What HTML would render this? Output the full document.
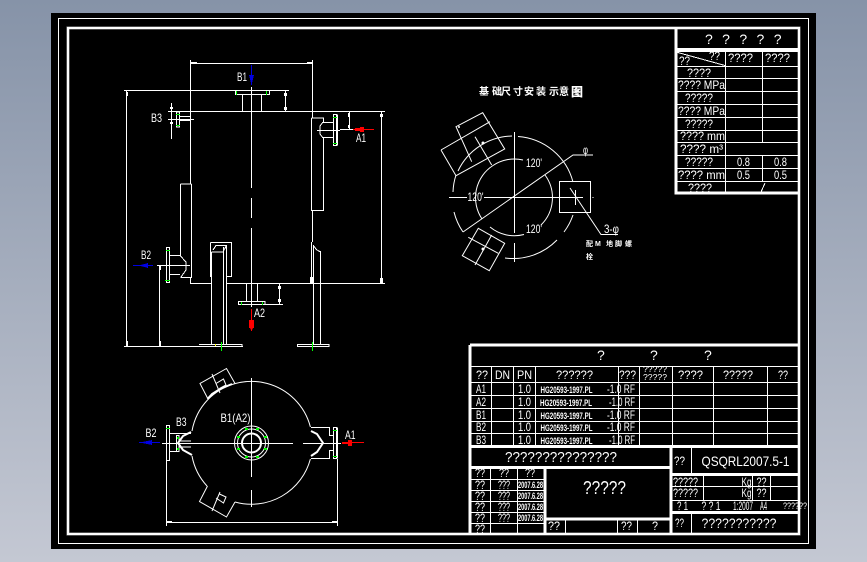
<!DOCTYPE html>
<html>
<head>
<meta charset="utf-8">
<style>
html,body{margin:0;padding:0;width:867px;height:562px;overflow:hidden;background:linear-gradient(#8693a8,#c4c8d3)}
svg{position:absolute;left:0;top:0}
text{fill:#fff;font-family:"Liberation Sans","Noto Sans CJK SC",sans-serif;font-size:12px}
.c{font-family:"Liberation Sans","Noto Sans CJK SC",sans-serif;font-size:10px;font-weight:bold}
.s{font-size:9px;font-weight:bold}
</style>
</head>
<body>
<svg width="867" height="562" viewBox="0 0 867 562" xmlns="http://www.w3.org/2000/svg">
<rect x="51" y="13" width="765" height="536" fill="#000"/>
<g fill="none" shape-rendering="crispEdges">
<rect x="58.5" y="18.5" width="750" height="525" stroke="#fff"/>
<rect x="68" y="28" width="731" height="506" stroke="#999" stroke-width="3"/>
<rect x="68" y="28" width="731" height="506" stroke="#fff" stroke-width="2"/>
<!-- top right table -->
<path stroke="#fff" stroke-width="3" d="M676 28V193H799M676 49.5H799"/>
<path stroke="#fff" d="M676 51.5H798M676 66.5H798M676 78.5H798M676 91.5H798M676 104.5H798M676 117.5H798M676 130.5H798M676 142.5H798M676 155.5H798M676 168.5H798M676 181.5H798M725.5 51V193M762.5 51V142M762.5 155V181"/>
<!-- bottom table -->
<path stroke="#fff" stroke-width="3" d="M470 345H799M470 345V534M470 446.5H799M470 467.5H671M671 446V534M672 474.5H799M672 512.5H799M545 467V534M545 519H671"/>
<path stroke="#fff" d="M470 366.5H798M470 382.5H798M470 395.5H798M470 408.5H798M470 421.5H798M470 433.5H798M491.5 367V446M513.5 367V446M535.5 367V446M618.5 367V446M639.5 367V446M672.5 367V446M713.5 367V446M767.5 367V446M691.5 447V474M691.5 513V533M672 486.5H798M672 500.5H798M703.5 475V500M752.5 475V500M770.5 475V500M470 479.5H544M470 490.5H544M470 501.5H544M470 512.5H544M470 523.5H544M490.5 468V533M517.5 468V533M565.5 520V533M617.5 520V533M637.5 520V533"/>
</g>
<g fill="none" stroke="#fff" shape-rendering="crispEdges">
<path d="M676 52L725 65.5M765 183L761 192"/>
<!-- front view -->
<path d="M190.5 60V184M312.5 60V118M191 63.5H312M124 90.5H289M168 111.5H385M235.5 90V94.5H269.5V90M242.5 94V111M261.5 94V111M285.5 91V111M126.5 91V346M381.5 111V283M349.5 111V129M340 129.5H353"/>
<path d="M171.5 103V139M168 119.5H194M176.5 112V127H179.5V112ZM179 116.5H190M179 120.5H190M180.5 184H191.5M180.5 184V256M191.5 184V277.5H180.5M190.5 277V283.5H211M227 283.5H385"/>
<path d="M166.5 247.5V282.5H169.5V247.5ZM169 255.5H180L186 262V270L181 277M169 274.5H180M157 265.5H190M159.5 265V346M124 346.5H243"/>
<path d="M210.5 242.5V277M210.5 242.5H231.5V276.5H227M211.5 252V345M211.5 252H223.5M223.5 247V345M226.5 245.5V345M213 250L216 245.5H226.5L223.5 251M199 344.5H242V346M297.5 344.5H329V346.5H297.5Z"/>
<path d="M311.5 118V210.5H323.5V137M311.5 118H323.5V122M312.5 210V242M311.5 242V277M313.5 245V345M313.5 246L317 250L320.5 252M320.5 251V344"/>
<path d="M333.5 114.5V145.5H337V114.5ZM323 122.5H333M323 137.5H333M323 122L320 126V134L323 138M317 130.5H340"/>
<path d="M246.5 283V302M257.5 283V302M238.5 301.5H265V304.5H238.5ZM238 304.5H283M279.5 284V304M251.5 87V188M251.5 198V218M251.5 228V307"/>
<path stroke-width="2" d="M337 115V145"/>
</g>
<!-- dim ticks -->
<g fill="#fff" shape-rendering="crispEdges">
<rect x="191" y="62" width="6" height="2"/><rect x="307" y="62" width="6" height="2"/>
<rect x="284" y="93" width="3" height="3"/><rect x="284" y="107" width="3" height="3"/>
<rect x="126" y="92" width="2" height="4"/><rect x="380" y="114" width="3" height="3"/><rect x="380" y="278" width="3" height="5"/>
<rect x="348" y="113" width="2" height="4"/><rect x="348" y="125" width="2" height="3"/>
<rect x="170" y="107" width="3" height="2"/><rect x="170" y="122" width="3" height="2"/>
<rect x="126" y="341" width="2" height="5"/><rect x="159" y="341" width="2" height="5"/><rect x="159" y="266" width="2" height="4"/>
<rect x="278" y="286" width="3" height="3"/><rect x="278" y="299" width="3" height="3"/>
<rect x="310" y="277" width="3" height="6"/>
<rect x="167" y="521" width="5" height="2"/><rect x="332" y="521" width="5" height="2"/>
</g>
<!-- green -->
<path fill="none" stroke="#0f0" shape-rendering="crispEdges" d="M236.5 91V95M266.5 91V95M176 114.5H180M176 125.5H180M166 250.5H170M165 280.5H170M333 117.5H337M333 143.5H337M221.5 342V351M312.5 342V351M241.5 302V305M262.5 302V305"/>
<rect x="215" y="344" width="1" height="2" fill="#ff0"/>
<!-- arrows -->
<g shape-rendering="crispEdges">
<path stroke="#0000e0" fill="none" d="M251.5 65V85M133 265.5H153M139 442.5H160"/>
<path fill="#0000e0" d="M249 75H254L251.5 85ZM139 265.5L148 263V268ZM140 442.5L152 440V445Z"/>
<path stroke="#f00" fill="none" d="M353 129.5H374M251.5 309V331M342 442.5H364"/>
<path fill="#f00" d="M355 128H360V127H364V132H360V131H355ZM249 320H254V328H253L251.5 331L250 328H249ZM342 442H348V440H352V446H348V444H342Z"/>
</g>
<!-- plan view -->
<g fill="none" stroke="#fff">
<path d="M207.5 400A61 61 0 0 1 310.4 427M310.4 459A61 61 0 0 1 235 502M207 486A61 61 0 0 1 192 456M192 431A61 61 0 0 1 207.5 400"/>
<path d="M207.5 399L212 394L220 389L232 384" stroke-width="2"/>
<path shape-rendering="crispEdges" d="M251.5 378V477M251.5 490V507M162 443.5H293M303 443.5H341"/>
<circle cx="251.5" cy="443" r="9.5" stroke-width="2"/>
<circle cx="251.5" cy="443" r="14"/>
<circle cx="251.5" cy="443" r="17"/>
<path d="M207.500 398L200 383.500L226.500 368.500L235 383.500M212 374L220 393M216 383.500L223.500 379L226 385L219.500 388.500"/>
<path d="M207.500 486L199.500 501.500L226.500 517L235 502M212 511L220 492M216 498L223.500 503L226 497L219.500 494"/>
<path shape-rendering="crispEdges" d="M166.5 425.5V460.5H169.5V425.5ZM169 433.5H191M169 451.5H176M176.5 435.5V451.5H179V435.5ZM179 441H191M179 447H191"/>
<path stroke-width="2" d="M191 432L183 436L178 443L183 450L192 455"/>
<path shape-rendering="crispEdges" d="M311 427.5H329.5V435.5H333.5M333.5 450.5H329.5V458.5H311M333.5 427.5V458.5H337V427.5Z"/>
<path stroke-width="2" d="M311 431L317 434L323 443L317 452L311 456M337 428V458"/>
<path shape-rendering="crispEdges" d="M166.5 461V526M337.5 459V526M167 522.5H337"/>
</g>
<g fill="#0f0" shape-rendering="crispEdges">
<rect x="166" y="428" width="4" height="1"/><rect x="333" y="430" width="4" height="1"/><rect x="333" y="456" width="4" height="1"/><rect x="177" y="437" width="2" height="2"/><rect x="177" y="448" width="2" height="2"/>
<rect x="245" y="428" width="3" height="2"/><rect x="256" y="428" width="3" height="2"/><rect x="264" y="436" width="3" height="2"/><rect x="264" y="448" width="3" height="2"/><rect x="256" y="456" width="3" height="2"/><rect x="245" y="456" width="3" height="2"/><rect x="237" y="448" width="3" height="2"/><rect x="237" y="436" width="3" height="2"/>
</g>
<!-- foundation -->
<g fill="none" stroke="#fff">
<path d="M518 136.500A61.300 61.300 0 0 1 573 182M573 215A61.300 61.300 0 0 1 564 232M557 240A61.300 61.300 0 0 1 505 258M463 232A61.300 61.300 0 0 1 454 212M453 192A61.300 61.300 0 0 1 456 175M458 171A61.300 61.300 0 0 1 512 136"/>
<path d="M545 175A38.300 38.300 0 0 1 541 225M524 234.500A38.300 38.300 0 0 1 490 227M482 219A38.300 38.300 0 0 1 493 165.500A38.300 38.300 0 0 1 523 160"/>
<path shape-rendering="crispEdges" d="M514.500 132V233M514.500 243V262M449 197.500H467M484 197.500H583M593 197V198M559.500 181.500H590.500V212.500H559.500Z"/>
<path d="M463 232L573 155H593M570 188L601 234.500H618M575.500 190V205"/>
<path d="M441 150L456 175.700L504.700 149L482.700 112.700L456 126.700L471.700 161.700M441 150L490 121.700M475 136.700L491.700 165"/>
<path d="M478.300 228.300L504.700 243.300L489.300 270.700L462.300 255.700ZM468.300 237.300L498.300 253.300M491.700 235L475 265"/>
</g>
<circle cx="483" cy="143" r="1.500" fill="#fff"/><circle cx="483" cy="249" r="1.500" fill="#fff"/><circle cx="459" cy="127" r="1" fill="#fff"/>
<!-- drawing labels -->
<text x="237" y="81" textLength="10" lengthAdjust="spacingAndGlyphs">B1</text>
<text x="151" y="122" textLength="11" lengthAdjust="spacingAndGlyphs">B3</text>
<text x="356" y="142" textLength="10" lengthAdjust="spacingAndGlyphs">A1</text>
<text x="141" y="259" textLength="10" lengthAdjust="spacingAndGlyphs">B2</text>
<text x="254" y="317" textLength="11" lengthAdjust="spacingAndGlyphs">A2</text>
<text x="145.500" y="437" textLength="11" lengthAdjust="spacingAndGlyphs">B2</text>
<text x="176" y="426" textLength="10.500" lengthAdjust="spacingAndGlyphs">B3</text>
<text x="345" y="439" textLength="10.500" lengthAdjust="spacingAndGlyphs">A1</text>
<text x="220.500" y="422" textLength="30" lengthAdjust="spacingAndGlyphs">B1(A2)</text>
<text x="526" y="167" textLength="16" lengthAdjust="spacingAndGlyphs">120'</text>
<text x="526" y="233" textLength="16" lengthAdjust="spacingAndGlyphs">120'</text>
<text x="467.500" y="201" textLength="16" lengthAdjust="spacingAndGlyphs">120'</text>
<text x="583" y="154" textLength="5" lengthAdjust="spacingAndGlyphs">φ</text>
<text x="604" y="233" textLength="15" lengthAdjust="spacingAndGlyphs">3-φ</text>
<text class="c" x="479" y="95">基</text><text class="c" x="492" y="95" font-size="11">础</text><text class="c" x="501" y="95">尺</text><text class="c" x="513" y="95">寸</text><text class="c" x="524" y="95">安</text><text class="c" x="536" y="95">装</text><text class="c" x="549" y="95">示</text><text class="c" x="559" y="95">意</text><text class="c" x="571" y="96" style="font-size:12px;font-weight:900">图</text>
<g class="c">
<text class="c" x="586" y="246" style="font-size:7px">配</text><text class="c" x="595" y="246" style="font-size:7px">M</text><text class="c" x="606" y="246" style="font-size:7px">地</text><text class="c" x="615" y="246" style="font-size:7px">脚</text><text class="c" x="625" y="246" style="font-size:7px">螺</text><text class="c" x="586" y="259" style="font-size:7px">栓</text>
</g>
<!-- top right table text -->
<g>
<text x="705" y="44" style="font-size:14px;letter-spacing:9.400px">?????</text>
<text x="709" y="60" textLength="11" lengthAdjust="spacingAndGlyphs">??</text>
<text x="679" y="65" textLength="11" lengthAdjust="spacingAndGlyphs">??</text>
<text x="728" y="62" textLength="25" lengthAdjust="spacingAndGlyphs">????</text>
<text x="765" y="62" textLength="25" lengthAdjust="spacingAndGlyphs">????</text>
<text x="687" y="77" textLength="24" lengthAdjust="spacingAndGlyphs">????</text>
<text x="678" y="89" textLength="47" lengthAdjust="spacingAndGlyphs">???? MPa</text>
<text x="685" y="102" textLength="28" lengthAdjust="spacingAndGlyphs">?????</text>
<text x="678" y="115" textLength="47" lengthAdjust="spacingAndGlyphs">???? MPa</text>
<text x="685" y="128" textLength="28" lengthAdjust="spacingAndGlyphs">?????</text>
<text x="680" y="140" textLength="45" lengthAdjust="spacingAndGlyphs">???? mm</text>
<text x="680" y="153" textLength="43" lengthAdjust="spacingAndGlyphs">???? m³</text>
<text x="685" y="166" textLength="28" lengthAdjust="spacingAndGlyphs">?????</text>
<text x="678" y="179" textLength="47" lengthAdjust="spacingAndGlyphs">???? mm</text>
<text x="688" y="192" textLength="24" lengthAdjust="spacingAndGlyphs">????</text>
<text x="737" y="166" textLength="13" lengthAdjust="spacingAndGlyphs">0.8</text>
<text x="774" y="166" textLength="13" lengthAdjust="spacingAndGlyphs">0.8</text>
<text x="737" y="179" textLength="13" lengthAdjust="spacingAndGlyphs">0.5</text>
<text x="774" y="179" textLength="13" lengthAdjust="spacingAndGlyphs">0.5</text>
</g>
<!-- bottom table text -->
<g>
<text x="597" y="360" style="font-size:14px">?</text><text x="650" y="360" style="font-size:14px">?</text><text x="704" y="360" style="font-size:14px">?</text>
<text x="476" y="379" textLength="12" lengthAdjust="spacingAndGlyphs">??</text>
<text x="495" y="379" textLength="15" lengthAdjust="spacingAndGlyphs">DN</text>
<text x="517" y="379" textLength="15" lengthAdjust="spacingAndGlyphs">PN</text>
<text x="556" y="379" textLength="37" lengthAdjust="spacingAndGlyphs">??????</text>
<text x="619" y="379" textLength="17" lengthAdjust="spacingAndGlyphs">???</text>
<text x="643" y="372" textLength="24" lengthAdjust="spacingAndGlyphs" style="font-size:8px">?????</text>
<text x="643" y="380" textLength="24" lengthAdjust="spacingAndGlyphs" style="font-size:8px">?????</text>
<text x="678" y="379" textLength="25" lengthAdjust="spacingAndGlyphs">????</text>
<text x="723" y="379" textLength="30" lengthAdjust="spacingAndGlyphs">?????</text>
<text x="778" y="379" textLength="10" lengthAdjust="spacingAndGlyphs">??</text>
<text x="476" y="393" textLength="10" lengthAdjust="spacingAndGlyphs">A1</text>
<text x="476" y="406" textLength="10" lengthAdjust="spacingAndGlyphs">A2</text>
<text x="476" y="419" textLength="10" lengthAdjust="spacingAndGlyphs">B1</text>
<text x="476" y="431" textLength="10" lengthAdjust="spacingAndGlyphs">B2</text>
<text x="476" y="444" textLength="10" lengthAdjust="spacingAndGlyphs">B3</text>
<text x="518" y="393" textLength="13" lengthAdjust="spacingAndGlyphs">1.0</text>
<text x="518" y="406" textLength="13" lengthAdjust="spacingAndGlyphs">1.0</text>
<text x="518" y="419" textLength="13" lengthAdjust="spacingAndGlyphs">1.0</text>
<text x="518" y="431" textLength="13" lengthAdjust="spacingAndGlyphs">1.0</text>
<text x="518" y="444" textLength="13" lengthAdjust="spacingAndGlyphs">1.0</text>
<text class="s" x="540.500" y="393" textLength="52" lengthAdjust="spacingAndGlyphs">HG20593-1997.PL</text>
<text class="s" x="540" y="406" textLength="52" lengthAdjust="spacingAndGlyphs">HG20593-1997.PL</text>
<text class="s" x="540.500" y="419" textLength="52" lengthAdjust="spacingAndGlyphs">HG20593-1997.PL</text>
<text class="s" x="540.500" y="431" textLength="52" lengthAdjust="spacingAndGlyphs">HG20593-1997.PL</text>
<text class="s" x="540.500" y="444" textLength="52" lengthAdjust="spacingAndGlyphs">HG20593-1997.PL</text>
<text x="607" y="393" textLength="28" lengthAdjust="spacingAndGlyphs">-1.0 RF</text>
<text x="609" y="406" textLength="26" lengthAdjust="spacingAndGlyphs">-1.0 RF</text>
<text x="607" y="419" textLength="28" lengthAdjust="spacingAndGlyphs">-1.0 RF</text>
<text x="607" y="431" textLength="28" lengthAdjust="spacingAndGlyphs">-1.0 RF</text>
<text x="609" y="444" textLength="26" lengthAdjust="spacingAndGlyphs">-1.0 RF</text>
<text x="505" y="462" textLength="112" lengthAdjust="spacingAndGlyphs" style="font-size:15px">???????????????</text>
<text x="674" y="465" textLength="11" lengthAdjust="spacingAndGlyphs">??</text>
<text x="701.500" y="466" textLength="88" lengthAdjust="spacingAndGlyphs" style="font-size:14px">QSQRL2007.5-1</text>
<text x="673" y="486" textLength="25" lengthAdjust="spacingAndGlyphs">?????</text>
<text x="741.500" y="486" textLength="10" lengthAdjust="spacingAndGlyphs">Kg</text>
<text x="756.500" y="486" textLength="10" lengthAdjust="spacingAndGlyphs">??</text>
<text x="673" y="497" textLength="25" lengthAdjust="spacingAndGlyphs">?????</text>
<text x="741.500" y="497" textLength="10" lengthAdjust="spacingAndGlyphs">Kg</text>
<text x="756.500" y="497" textLength="10" lengthAdjust="spacingAndGlyphs">??</text>
<text x="677" y="510" textLength="11" lengthAdjust="spacingAndGlyphs">? 1</text>
<text x="701.500" y="510" textLength="19" lengthAdjust="spacingAndGlyphs">? ? 1</text>
<text x="733" y="510" textLength="20" lengthAdjust="spacingAndGlyphs">1:2007</text>
<text x="760" y="510" textLength="7" lengthAdjust="spacingAndGlyphs">A4</text>
<text x="783" y="509" textLength="24" lengthAdjust="spacingAndGlyphs" style="font-size:9px">??????</text>
<text x="675" y="527" textLength="9" lengthAdjust="spacingAndGlyphs">??</text>
<text x="701.500" y="528" textLength="75" lengthAdjust="spacingAndGlyphs" style="font-size:14px">???????????</text>
<text x="583" y="494" textLength="43" lengthAdjust="spacingAndGlyphs" style="font-size:18px">?????</text>
<text x="548" y="530" textLength="12" lengthAdjust="spacingAndGlyphs">??</text>
<text x="621" y="530" textLength="11" lengthAdjust="spacingAndGlyphs">??</text>
<text x="652" y="530" textLength="6" lengthAdjust="spacingAndGlyphs">?</text>
<text x="475" y="477" textLength="10" lengthAdjust="spacingAndGlyphs">??</text>
<text x="499" y="477" textLength="10" lengthAdjust="spacingAndGlyphs">??</text>
<text x="525" y="477" textLength="10" lengthAdjust="spacingAndGlyphs">??</text>
<text x="475" y="489" textLength="10" lengthAdjust="spacingAndGlyphs">??</text>
<text x="498" y="489" textLength="12" lengthAdjust="spacingAndGlyphs">???</text>
<text class="s" x="518" y="488" textLength="25" lengthAdjust="spacingAndGlyphs">2007.6.28</text>
<text x="475" y="500" textLength="10" lengthAdjust="spacingAndGlyphs">??</text>
<text x="498" y="500" textLength="12" lengthAdjust="spacingAndGlyphs">???</text>
<text class="s" x="518" y="499" textLength="25" lengthAdjust="spacingAndGlyphs">2007.6.28</text>
<text x="475" y="511" textLength="10" lengthAdjust="spacingAndGlyphs">??</text>
<text x="498" y="511" textLength="12" lengthAdjust="spacingAndGlyphs">???</text>
<text class="s" x="518" y="510" textLength="25" lengthAdjust="spacingAndGlyphs">2007.6.28</text>
<text x="475" y="522" textLength="10" lengthAdjust="spacingAndGlyphs">??</text>
<text x="498" y="522" textLength="12" lengthAdjust="spacingAndGlyphs">???</text>
<text class="s" x="518" y="521" textLength="25" lengthAdjust="spacingAndGlyphs">2007.6.28</text>
<text x="475" y="533" textLength="10" lengthAdjust="spacingAndGlyphs">??</text>
</g>
</svg>
</body>
</html>
